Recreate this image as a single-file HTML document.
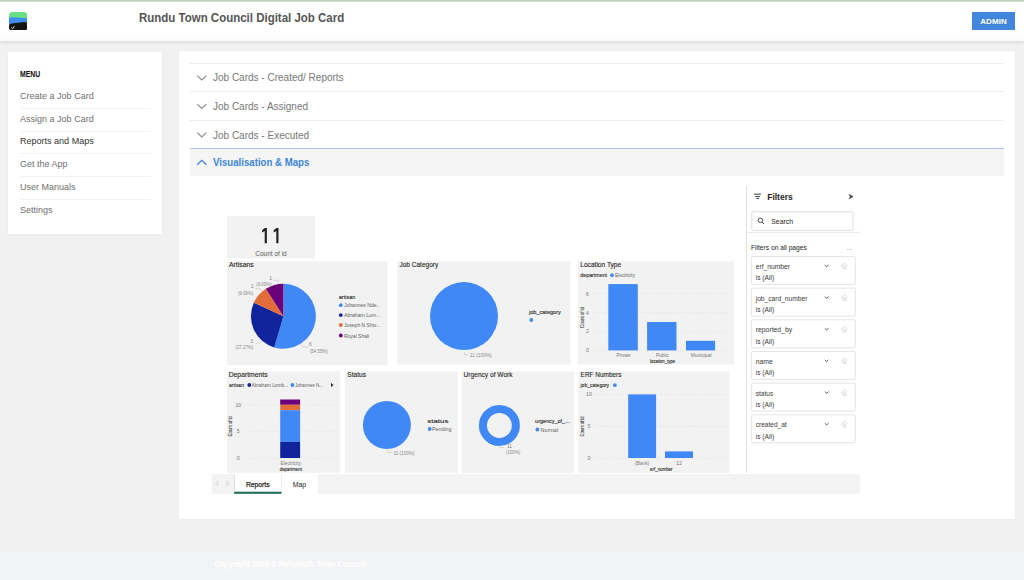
<!DOCTYPE html>
<html><head><meta charset="utf-8">
<style>
*{margin:0;padding:0;box-sizing:border-box}
html,body{width:1024px;height:580px;overflow:hidden;background:#f1f1f1;font-family:"Liberation Sans",sans-serif}
.abs{position:absolute}
#topline{left:0;top:0;width:1024px;height:2.2px;background:linear-gradient(#bcd4b8 55%,#dfe3de)}
#header{left:0;top:0;width:1024px;height:41px;background:linear-gradient(#fff 33px,#fafafa 41px);box-shadow:0 1px 4px rgba(0,0,0,.12)}
#title{left:139.3px;top:11.1px;font-size:12px;transform:scaleX(0.957);transform-origin:0 0;font-weight:bold;color:#555;white-space:nowrap}
#admin{left:972px;top:12px;width:43px;height:18.3px;background:#4285dc;color:#fff;font-size:8px;font-weight:bold;text-align:center;line-height:19.6px;letter-spacing:0.1px}
#side{left:8px;top:51.8px;width:154px;height:182px;background:#fff;box-shadow:0 0 2px rgba(0,0,0,.05)}
.menu-h{left:20px;top:69.6px;font-size:8.2px;transform:scaleX(0.84);transform-origin:0 0;font-weight:bold;color:#111}
.mi{left:20px;width:131px;height:23px;font-size:9.3px;color:#6f6f6f;transform:scaleX(0.97);transform-origin:0 0;white-space:nowrap}
.sep{left:20px;width:131px;height:1px;background:#f2f2f2}
#main{left:179px;top:51px;width:836px;height:467.5px;background:#fff;box-shadow:0 0 2px rgba(0,0,0,.05)}
.acc{left:190px;width:814px;height:1px;background:#ececec}
.acc-t{left:213px;font-size:10px;color:#777;white-space:nowrap}
#footer{left:0;top:552px;width:1024px;height:28px;background:#f2f3f5}
#copy{left:213.6px;top:558.8px;font-size:8.4px;font-weight:bold;color:#fff;white-space:nowrap;transform:scaleX(0.906);transform-origin:0 0}
</style></head><body>
<div class="abs" id="header"></div>
<div class="abs" id="topline"></div>
<svg class="abs" style="left:8.6px;top:11.8px" width="18.4" height="18.6" viewBox="0 0 18.4 18.6">
 <defs><clipPath id="lc"><rect x="0" y="0" width="18.4" height="18.6" rx="3.6"/></clipPath></defs>
 <g clip-path="url(#lc)">
  <rect x="0" y="0" width="18.4" height="18.6" fill="#6ade83"/>
  <path d="M0 7.5 Q0 5.2 2.5 5.3 L18.4 6.4 L18.4 18.6 L0 18.6Z" fill="#3f8bf5"/>
  <path d="M0 14 Q0 11.7 2.5 11.5 L15.5 10.1 Q18.4 9.9 18.4 12.5 L18.4 18.6 L0 18.6Z" fill="#151212"/>
  <path d="M2.3 15.6 L3.6 16.8 L5.5 14" stroke="#d8d8d8" stroke-width="1" fill="none"/>
 </g>
</svg>
<div class="abs" id="title">Rundu Town Council Digital Job Card</div>
<div class="abs" id="admin">ADMIN</div>

<div class="abs" id="side"></div>
<div class="abs menu-h">MENU</div>
<div class="abs mi" style="top:91.1px">Create a Job Card</div>
<div class="abs sep" style="top:108px"></div>
<div class="abs mi" style="top:113.8px">Assign a Job Card</div>
<div class="abs sep" style="top:131px"></div>
<div class="abs mi" style="top:136.3px;color:#333">Reports and Maps</div>
<div class="abs sep" style="top:153px"></div>
<div class="abs mi" style="top:159.2px">Get the App</div>
<div class="abs sep" style="top:176px"></div>
<div class="abs mi" style="top:181.9px">User Manuals</div>
<div class="abs sep" style="top:199px"></div>
<div class="abs mi" style="top:204.9px">Settings</div>

<div class="abs" id="main"></div>
<div class="abs acc" style="top:63px"></div>
<div class="abs acc-t" style="top:72.4px">Job Cards - Created/ Reports</div>
<div class="abs acc" style="top:91px"></div>
<div class="abs acc-t" style="top:101px">Job Cards - Assigned</div>
<div class="abs acc" style="top:120px"></div>
<div class="abs acc-t" style="top:129.5px">Job Cards - Executed</div>
<div class="abs" style="left:190px;top:148px;width:814px;height:28px;background:#f5f5f5;border-top:1px solid #a9c4e8"></div>
<div class="abs acc-t" style="top:157px;color:#3d85d8;font-weight:bold;transform:scaleX(0.965);transform-origin:0 0">Visualisation &amp; Maps</div>

<svg class="abs" style="left:0;top:0" width="1024" height="200">
<path d="M197.2 75.6 L201.8 80 L206.4 75.6" stroke="#8a8a8a" stroke-width="1.1" fill="none"/>
<path d="M197.2 104.1 L201.8 108.5 L206.4 104.1" stroke="#8a8a8a" stroke-width="1.1" fill="none"/>
<path d="M197.2 132.6 L201.8 137 L206.4 132.6" stroke="#8a8a8a" stroke-width="1.1" fill="none"/>
<path d="M197.2 164.8 L201.8 160.4 L206.4 164.8" stroke="#3d85d8" stroke-width="1.3" fill="none"/>
</svg>
<svg class="abs" style="left:0;top:0" width="1024" height="580" viewBox="0 0 1024 580" font-family="Liberation Sans, sans-serif">
<rect x="227" y="216" width="88.00" height="42.30" fill="#f2f2f2"/>
<path d="M264.7,228 H266.9 V243.2 H264.7 V231 L262.09999999999997,232.6 V230.3 Z" fill="#252423" stroke="none" stroke-width="0.5"/>
<path d="M276.3,228 H278.5 V243.2 H276.3 V231 L273.7,232.6 V230.3 Z" fill="#252423" stroke="none" stroke-width="0.5"/>
<text x="271" y="255.5" font-size="7.2" fill="#605e5c" font-weight="normal" text-anchor="middle" textLength="31.5" lengthAdjust="spacingAndGlyphs">Count of id</text>
<rect x="227" y="261.3" width="160.30" height="103.70" fill="#f2f2f2"/>
<text x="229" y="267" font-size="6.8" fill="#252423" font-weight="normal" text-anchor="start" textLength="24.8" lengthAdjust="spacingAndGlyphs" stroke="#252423" stroke-width="0.1">Artisans</text>
<path d="M283.4,316.2 L283.40,283.70 A32.5,32.5 0 1 1 274.24,347.38 Z" fill="#3f88f5" stroke="none" stroke-width="0.5"/>
<path d="M283.4,316.2 L274.24,347.38 A32.5,32.5 0 0 1 253.84,302.70 Z" fill="#12239e" stroke="none" stroke-width="0.5"/>
<path d="M283.4,316.2 L253.84,302.70 A32.5,32.5 0 0 1 265.83,288.86 Z" fill="#e06d3a" stroke="none" stroke-width="0.5"/>
<path d="M283.4,316.2 L265.83,288.86 A32.5,32.5 0 0 1 283.40,283.70 Z" fill="#6b007b" stroke="none" stroke-width="0.5"/>
<text x="270.7" y="279.5" font-size="5" fill="#888" font-weight="normal" text-anchor="middle">1</text>
<text x="256.2" y="286" font-size="5" fill="#888" font-weight="normal" text-anchor="start" textLength="15.5" lengthAdjust="spacingAndGlyphs">(9.09%)</text>
<path d="M273.6,280.3 H278.6 V283.4" fill="none" stroke="#bbb" stroke-width="0.5"/>
<text x="252.2" y="288.2" font-size="5" fill="#888" font-weight="normal" text-anchor="middle">1</text>
<text x="237.9" y="294.7" font-size="5" fill="#888" font-weight="normal" text-anchor="start" textLength="15.2" lengthAdjust="spacingAndGlyphs">(9.09%)</text>
<path d="M255.2,288.6 H259.7 L261.9,290.7" fill="none" stroke="#bbb" stroke-width="0.5"/>
<text x="251.7" y="342.8" font-size="5" fill="#888" font-weight="normal" text-anchor="middle">3</text>
<text x="235.5" y="349.4" font-size="5" fill="#888" font-weight="normal" text-anchor="start" textLength="17.6" lengthAdjust="spacingAndGlyphs">(27.27%)</text>
<path d="M255.5,343.2 H259.5 L262,341" fill="none" stroke="#bbb" stroke-width="0.5"/>
<text x="310.3" y="345.8" font-size="5" fill="#888" font-weight="normal" text-anchor="middle">6</text>
<text x="309.9" y="352.7" font-size="5" fill="#888" font-weight="normal" text-anchor="start" textLength="17.8" lengthAdjust="spacingAndGlyphs">(54.55%)</text>
<path d="M300.5,344.5 L303,347 H308" fill="none" stroke="#bbb" stroke-width="0.5"/>
<text x="338.7" y="299" font-size="5.8" fill="#252423" font-weight="normal" text-anchor="start" textLength="16.8" lengthAdjust="spacingAndGlyphs" stroke="#252423" stroke-width="0.1">artisan</text>
<circle cx="340.8" cy="305.2" r="1.9" fill="#3f88f5"/>
<text x="344" y="307.2" font-size="5.8" fill="#605e5c" font-weight="normal" text-anchor="start" textLength="36.7" lengthAdjust="spacingAndGlyphs">Johannes Nde...</text>
<circle cx="340.8" cy="315.1" r="1.9" fill="#12239e"/>
<text x="344" y="317.1" font-size="5.8" fill="#605e5c" font-weight="normal" text-anchor="start" textLength="36.5" lengthAdjust="spacingAndGlyphs">Abraham Lom...</text>
<circle cx="340.8" cy="325.0" r="1.9" fill="#e06d3a"/>
<text x="344" y="327.0" font-size="5.8" fill="#605e5c" font-weight="normal" text-anchor="start" textLength="36.2" lengthAdjust="spacingAndGlyphs">Joseph N Shiv...</text>
<circle cx="340.8" cy="335.5" r="1.9" fill="#6b007b"/>
<text x="344" y="337.5" font-size="5.8" fill="#605e5c" font-weight="normal" text-anchor="start" textLength="25.2" lengthAdjust="spacingAndGlyphs">Royal Shali</text>
<rect x="397.3" y="261.3" width="173.20" height="103.40" fill="#f2f2f2"/>
<text x="399.5" y="267" font-size="6.8" fill="#252423" font-weight="normal" text-anchor="start" textLength="38.7" lengthAdjust="spacingAndGlyphs" stroke="#252423" stroke-width="0.1">Job Category</text>
<circle cx="464" cy="316.1" r="34" fill="#3f88f5"/>
<text x="528.9" y="314" font-size="5.8" fill="#252423" font-weight="normal" text-anchor="start" textLength="32" lengthAdjust="spacingAndGlyphs" stroke="#252423" stroke-width="0.1">job_category</text>
<circle cx="531.3" cy="320" r="1.9" fill="#3f88f5"/>
<path d="M464.4,352.2 V354.8 H468.4" fill="none" stroke="#bbb" stroke-width="0.5"/>
<text x="470" y="357" font-size="5" fill="#888" font-weight="normal" text-anchor="start" textLength="21.6" lengthAdjust="spacingAndGlyphs">11 (100%)</text>
<rect x="578" y="261.3" width="156.20" height="103.30" fill="#f2f2f2"/>
<text x="580.3" y="267" font-size="6.8" fill="#252423" font-weight="normal" text-anchor="start" textLength="40.9" lengthAdjust="spacingAndGlyphs" stroke="#252423" stroke-width="0.1">Location Type</text>
<text x="580.3" y="277" font-size="5.5" fill="#252423" font-weight="normal" text-anchor="start" textLength="26.8" lengthAdjust="spacingAndGlyphs" stroke="#252423" stroke-width="0.1">department</text>
<circle cx="612" cy="275.2" r="1.9" fill="#3f88f5"/>
<text x="615" y="277" font-size="5.5" fill="#605e5c" font-weight="normal" text-anchor="start" textLength="20" lengthAdjust="spacingAndGlyphs">Electricity</text>
<text x="587.4" y="295.5" font-size="5.2" fill="#777" font-weight="normal" text-anchor="middle">6</text>
<line x1="592.2" y1="293.7" x2="732" y2="293.7" stroke="#d4d4d4" stroke-width="0.5" stroke-dasharray="0.8 1.4"/>
<text x="587.4" y="314.5" font-size="5.2" fill="#777" font-weight="normal" text-anchor="middle">4</text>
<line x1="592.2" y1="312.7" x2="732" y2="312.7" stroke="#d4d4d4" stroke-width="0.5" stroke-dasharray="0.8 1.4"/>
<text x="587.4" y="333.40000000000003" font-size="5.2" fill="#777" font-weight="normal" text-anchor="middle">2</text>
<line x1="592.2" y1="331.6" x2="732" y2="331.6" stroke="#d4d4d4" stroke-width="0.5" stroke-dasharray="0.8 1.4"/>
<text x="587.4" y="352.3" font-size="5.2" fill="#777" font-weight="normal" text-anchor="middle">0</text>
<line x1="592.2" y1="350.5" x2="732" y2="350.5" stroke="#d4d4d4" stroke-width="0.5" stroke-dasharray="0.8 1.4"/>
<text x="582.3" y="317.5" stroke="#3a3a3a" stroke-width="0.1" font-size="5" fill="#3a3a3a" font-weight="normal" text-anchor="middle" textLength="21" lengthAdjust="spacingAndGlyphs" transform="rotate(-90 582.3 317.5)" dominant-baseline="central">Count of id</text>
<rect x="608.3" y="284.1" width="29.50" height="66.30" fill="#3f88f5"/>
<rect x="647.1" y="322" width="29.40" height="28.40" fill="#3f88f5"/>
<rect x="686" y="340.8" width="29.10" height="9.60" fill="#3f88f5"/>
<text x="623.5" y="357.2" font-size="5.2" fill="#777" font-weight="normal" text-anchor="middle" textLength="14" lengthAdjust="spacingAndGlyphs">Private</text>
<text x="662.4" y="357.2" font-size="5.2" fill="#777" font-weight="normal" text-anchor="middle" textLength="13" lengthAdjust="spacingAndGlyphs">Public</text>
<text x="701.2" y="357.2" font-size="5.2" fill="#777" font-weight="normal" text-anchor="middle" textLength="20.8" lengthAdjust="spacingAndGlyphs">Municipal</text>
<text x="662.6" y="363" font-size="5" fill="#252423" font-weight="normal" text-anchor="middle" textLength="25" lengthAdjust="spacingAndGlyphs" stroke="#252423" stroke-width="0.1">location_type</text>
<rect x="227" y="371.3" width="113.00" height="101.50" fill="#f2f2f2"/>
<text x="228.7" y="377" font-size="6.8" fill="#252423" font-weight="normal" text-anchor="start" textLength="38.9" lengthAdjust="spacingAndGlyphs" stroke="#252423" stroke-width="0.1">Departments</text>
<text x="229" y="387" font-size="5.5" fill="#252423" font-weight="normal" text-anchor="start" textLength="14.9" lengthAdjust="spacingAndGlyphs" stroke="#252423" stroke-width="0.1">artisan</text>
<circle cx="249.3" cy="385" r="1.9" fill="#12239e"/>
<text x="251.6" y="387" font-size="5.5" fill="#605e5c" font-weight="normal" text-anchor="start" textLength="36.4" lengthAdjust="spacingAndGlyphs">Abraham Lomb...</text>
<circle cx="292.4" cy="385" r="1.9" fill="#3f88f5"/>
<text x="295" y="387" font-size="5.5" fill="#605e5c" font-weight="normal" text-anchor="start" textLength="28.1" lengthAdjust="spacingAndGlyphs">Johannes N...</text>
<path d="M331,383 L333.5,385 L331,387 Z" fill="#252423" stroke="none" stroke-width="0.5"/>
<text x="238.3" y="406.90000000000003" font-size="5.2" fill="#777" font-weight="normal" text-anchor="middle">10</text>
<line x1="244" y1="405.1" x2="338" y2="405.1" stroke="#d4d4d4" stroke-width="0.5" stroke-dasharray="0.8 1.4"/>
<text x="238.3" y="433.2" font-size="5.2" fill="#777" font-weight="normal" text-anchor="middle">5</text>
<line x1="244" y1="431.4" x2="338" y2="431.4" stroke="#d4d4d4" stroke-width="0.5" stroke-dasharray="0.8 1.4"/>
<text x="238.3" y="459.8" font-size="5.2" fill="#777" font-weight="normal" text-anchor="middle">0</text>
<line x1="244" y1="458" x2="338" y2="458" stroke="#d4d4d4" stroke-width="0.5" stroke-dasharray="0.8 1.4"/>
<text x="230.5" y="426.3" stroke="#3a3a3a" stroke-width="0.1" font-size="4.8" fill="#3a3a3a" font-weight="normal" text-anchor="middle" textLength="20.4" lengthAdjust="spacingAndGlyphs" transform="rotate(-90 230.5 426.3)" dominant-baseline="central">Count of id</text>
<rect x="280.2" y="399.5" width="19.90" height="5.30" fill="#6b007b"/>
<rect x="280.2" y="404.8" width="19.90" height="5.40" fill="#e06d3a"/>
<rect x="280.2" y="410.2" width="19.90" height="31.70" fill="#3f88f5"/>
<rect x="280.2" y="441.9" width="19.90" height="16.10" fill="#12239e"/>
<text x="290.8" y="464.5" font-size="5.2" fill="#777" font-weight="normal" text-anchor="middle" textLength="20.4" lengthAdjust="spacingAndGlyphs">Electricity</text>
<text x="290.8" y="470.8" font-size="5" fill="#252423" font-weight="normal" text-anchor="middle" textLength="22.2" lengthAdjust="spacingAndGlyphs" stroke="#252423" stroke-width="0.1">department</text>
<rect x="344.9" y="371.3" width="113.00" height="101.50" fill="#f2f2f2"/>
<text x="347.3" y="377" font-size="6.8" fill="#252423" font-weight="normal" text-anchor="start" textLength="18.7" lengthAdjust="spacingAndGlyphs" stroke="#252423" stroke-width="0.1">Status</text>
<circle cx="386.9" cy="425" r="24" fill="#3f88f5"/>
<text x="427.2" y="422.5" font-size="5.8" fill="#252423" font-weight="normal" text-anchor="start" textLength="21.3" lengthAdjust="spacingAndGlyphs" stroke="#252423" stroke-width="0.1">status</text>
<circle cx="429.7" cy="429" r="1.9" fill="#3f88f5"/>
<text x="432" y="431" font-size="5.8" fill="#605e5c" font-weight="normal" text-anchor="start" textLength="19.5" lengthAdjust="spacingAndGlyphs">Pending</text>
<path d="M387.6,449.5 V452.3 H392" fill="none" stroke="#bbb" stroke-width="0.5"/>
<text x="393.4" y="454.5" font-size="5" fill="#888" font-weight="normal" text-anchor="start" textLength="21.1" lengthAdjust="spacingAndGlyphs">11 (100%)</text>
<rect x="461.6" y="371.3" width="112.40" height="101.70" fill="#f2f2f2"/>
<text x="463.6" y="377.4" font-size="6.8" fill="#252423" font-weight="normal" text-anchor="start" textLength="49" lengthAdjust="spacingAndGlyphs" stroke="#252423" stroke-width="0.1">Urgency of Work</text>
<circle cx="499.4" cy="425.5" r="16.45" fill="none" stroke="#3f88f5" stroke-width="8.1"/>
<text x="535.1" y="423.2" font-size="5.8" fill="#252423" font-weight="normal" text-anchor="start" textLength="34.6" lengthAdjust="spacingAndGlyphs" stroke="#252423" stroke-width="0.1">urgency_of_...</text>
<circle cx="537.4" cy="429.5" r="1.9" fill="#3f88f5"/>
<text x="540.6" y="431.5" font-size="5.8" fill="#605e5c" font-weight="normal" text-anchor="start" textLength="17.5" lengthAdjust="spacingAndGlyphs">Normal</text>
<path d="M499.7,444.5 V447.5 H504" fill="none" stroke="#bbb" stroke-width="0.5"/>
<text x="506.9" y="447.5" font-size="5" fill="#888" font-weight="normal" text-anchor="start">11</text>
<text x="506" y="454.2" font-size="5" fill="#888" font-weight="normal" text-anchor="start" textLength="14.1" lengthAdjust="spacingAndGlyphs">(100%)</text>
<rect x="578.3" y="371.3" width="151.30" height="101.70" fill="#f2f2f2"/>
<text x="580.6" y="376.8" font-size="6.8" fill="#252423" font-weight="normal" text-anchor="start" textLength="40.9" lengthAdjust="spacingAndGlyphs" stroke="#252423" stroke-width="0.1">ERF Numbers</text>
<text x="580.5" y="387.2" font-size="5.5" fill="#252423" font-weight="normal" text-anchor="start" textLength="28.6" lengthAdjust="spacingAndGlyphs" stroke="#252423" stroke-width="0.1">job_category</text>
<circle cx="614.9" cy="385.2" r="1.9" fill="#3f88f5"/>
<text x="589" y="396.2" font-size="5.2" fill="#777" font-weight="normal" text-anchor="middle">10</text>
<line x1="594" y1="394.4" x2="728" y2="394.4" stroke="#d4d4d4" stroke-width="0.5" stroke-dasharray="0.8 1.4"/>
<text x="589" y="428.0" font-size="5.2" fill="#777" font-weight="normal" text-anchor="middle">5</text>
<line x1="594" y1="426.2" x2="728" y2="426.2" stroke="#d4d4d4" stroke-width="0.5" stroke-dasharray="0.8 1.4"/>
<text x="589" y="459.8" font-size="5.2" fill="#777" font-weight="normal" text-anchor="middle">0</text>
<line x1="594" y1="458" x2="728" y2="458" stroke="#d4d4d4" stroke-width="0.5" stroke-dasharray="0.8 1.4"/>
<text x="582.6" y="426.4" stroke="#3a3a3a" stroke-width="0.1" font-size="4.8" fill="#3a3a3a" font-weight="normal" text-anchor="middle" textLength="20" lengthAdjust="spacingAndGlyphs" transform="rotate(-90 582.6 426.4)" dominant-baseline="central">Count of id</text>
<rect x="628.2" y="394.4" width="27.90" height="63.60" fill="#3f88f5"/>
<rect x="665" y="451.4" width="28.00" height="6.60" fill="#3f88f5"/>
<text x="642" y="464.8" font-size="5.2" fill="#777" font-weight="normal" text-anchor="middle" textLength="14.4" lengthAdjust="spacingAndGlyphs">(Blank)</text>
<text x="679" y="464.8" font-size="5.2" fill="#777" font-weight="normal" text-anchor="middle">12</text>
<text x="661.3" y="470.8" font-size="5" fill="#252423" font-weight="normal" text-anchor="middle" textLength="22.5" lengthAdjust="spacingAndGlyphs" stroke="#252423" stroke-width="0.1">erf_number</text>
<line x1="746.5" y1="186" x2="746.5" y2="473" stroke="#e1e1e1" stroke-width="1"/>
<rect x="754.1" y="193.7" width="6.80" height="0.90" fill="#252423"/>
<rect x="755.1" y="196.2" width="4.80" height="0.90" fill="#252423"/>
<rect x="756.4" y="198.1" width="2.50" height="0.90" fill="#252423"/>
<text x="767.2" y="200" font-size="9" fill="#252423" font-weight="bold" text-anchor="start" textLength="25.5" lengthAdjust="spacingAndGlyphs">Filters</text>
<path d="M848.9,194.2 L853.1,196.6 L848.9,199 L850.2,196.6 Z" fill="#3a3a3a" stroke="#3a3a3a" stroke-width="0.4"/>
<rect x="751.8" y="211.8" width="101.2" height="18.5" rx="0.6" fill="#fff" stroke="#d4d4d4" stroke-width="0.8"/>
<circle cx="760.4" cy="220.3" r="2.3" fill="none" stroke="#252423" stroke-width="0.8"/>
<line x1="762" y1="222" x2="764" y2="224" stroke="#252423" stroke-width="0.9"/>
<text x="771.3" y="224.2" font-size="7.6" fill="#252423" font-weight="normal" text-anchor="start" textLength="21.7" lengthAdjust="spacingAndGlyphs">Search</text>
<line x1="746.5" y1="232.4" x2="859.7" y2="232.4" stroke="#e1e1e1" stroke-width="0.8"/>
<text x="751" y="250.2" font-size="7" fill="#252423" font-weight="normal" text-anchor="start" textLength="55.8" lengthAdjust="spacingAndGlyphs">Filters on all pages</text>
<circle cx="847.8" cy="249.3" r="0.4" fill="#555"/>
<circle cx="849.5999999999999" cy="249.3" r="0.4" fill="#555"/>
<circle cx="851.4" cy="249.3" r="0.4" fill="#555"/>
<rect x="751.6" y="256.50" width="103.7" height="28" rx="1.2" fill="#fff" stroke="#dedede" stroke-width="0.8"/>
<text x="755.7" y="269.1" font-size="7" fill="#3b3a39" font-weight="normal" text-anchor="start" textLength="34.4" lengthAdjust="spacingAndGlyphs">erf_number</text>
<text x="755.7" y="280.3" font-size="7" fill="#3b3a39" font-weight="normal" text-anchor="start" textLength="18.5" lengthAdjust="spacingAndGlyphs">is (All)</text>
<path d="M824.8,265.00 L826.7,266.60 L828.6,265.00" fill="none" stroke="#333" stroke-width="0.8"/>
<path d="M841.2,266.30 L844.6,262.90 L847,265.30 L843.6,268.60 Z M843.6,268.60 H846.6 M842.4,265.10 L845.8,267.50" fill="none" stroke="#c4c4c4" stroke-width="0.6"/>
<rect x="751.6" y="288.15" width="103.7" height="28" rx="1.2" fill="#fff" stroke="#dedede" stroke-width="0.8"/>
<text x="755.7" y="300.75" font-size="7" fill="#3b3a39" font-weight="normal" text-anchor="start" textLength="51.7" lengthAdjust="spacingAndGlyphs">job_card_number</text>
<text x="755.7" y="311.95" font-size="7" fill="#3b3a39" font-weight="normal" text-anchor="start" textLength="18.5" lengthAdjust="spacingAndGlyphs">is (All)</text>
<path d="M824.8,296.65 L826.7,298.25 L828.6,296.65" fill="none" stroke="#333" stroke-width="0.8"/>
<path d="M841.2,297.95 L844.6,294.55 L847,296.95 L843.6,300.25 Z M843.6,300.25 H846.6 M842.4,296.75 L845.8,299.15" fill="none" stroke="#c4c4c4" stroke-width="0.6"/>
<rect x="751.6" y="319.80" width="103.7" height="28" rx="1.2" fill="#fff" stroke="#dedede" stroke-width="0.8"/>
<text x="755.7" y="332.40000000000003" font-size="7" fill="#3b3a39" font-weight="normal" text-anchor="start" textLength="36.5" lengthAdjust="spacingAndGlyphs">reported_by</text>
<text x="755.7" y="343.6" font-size="7" fill="#3b3a39" font-weight="normal" text-anchor="start" textLength="18.5" lengthAdjust="spacingAndGlyphs">is (All)</text>
<path d="M824.8,328.30 L826.7,329.90 L828.6,328.30" fill="none" stroke="#333" stroke-width="0.8"/>
<path d="M841.2,329.60 L844.6,326.20 L847,328.60 L843.6,331.90 Z M843.6,331.90 H846.6 M842.4,328.40 L845.8,330.80" fill="none" stroke="#c4c4c4" stroke-width="0.6"/>
<rect x="751.6" y="351.45" width="103.7" height="28" rx="1.2" fill="#fff" stroke="#dedede" stroke-width="0.8"/>
<text x="755.7" y="364.05" font-size="7" fill="#3b3a39" font-weight="normal" text-anchor="start" textLength="17" lengthAdjust="spacingAndGlyphs">name</text>
<text x="755.7" y="375.25" font-size="7" fill="#3b3a39" font-weight="normal" text-anchor="start" textLength="18.5" lengthAdjust="spacingAndGlyphs">is (All)</text>
<path d="M824.8,359.95 L826.7,361.55 L828.6,359.95" fill="none" stroke="#333" stroke-width="0.8"/>
<path d="M841.2,361.25 L844.6,357.85 L847,360.25 L843.6,363.55 Z M843.6,363.55 H846.6 M842.4,360.05 L845.8,362.45" fill="none" stroke="#c4c4c4" stroke-width="0.6"/>
<rect x="751.6" y="383.10" width="103.7" height="28" rx="1.2" fill="#fff" stroke="#dedede" stroke-width="0.8"/>
<text x="755.7" y="395.70000000000005" font-size="7" fill="#3b3a39" font-weight="normal" text-anchor="start" textLength="17.5" lengthAdjust="spacingAndGlyphs">status</text>
<text x="755.7" y="406.90000000000003" font-size="7" fill="#3b3a39" font-weight="normal" text-anchor="start" textLength="18.5" lengthAdjust="spacingAndGlyphs">is (All)</text>
<path d="M824.8,391.60 L826.7,393.20 L828.6,391.60" fill="none" stroke="#333" stroke-width="0.8"/>
<path d="M841.2,392.90 L844.6,389.50 L847,391.90 L843.6,395.20 Z M843.6,395.20 H846.6 M842.4,391.70 L845.8,394.10" fill="none" stroke="#c4c4c4" stroke-width="0.6"/>
<rect x="751.6" y="414.75" width="103.7" height="28" rx="1.2" fill="#fff" stroke="#dedede" stroke-width="0.8"/>
<text x="755.7" y="427.35" font-size="7" fill="#3b3a39" font-weight="normal" text-anchor="start" textLength="31" lengthAdjust="spacingAndGlyphs">created_at</text>
<text x="755.7" y="438.55" font-size="7" fill="#3b3a39" font-weight="normal" text-anchor="start" textLength="18.5" lengthAdjust="spacingAndGlyphs">is (All)</text>
<path d="M824.8,423.25 L826.7,424.85 L828.6,423.25" fill="none" stroke="#333" stroke-width="0.8"/>
<path d="M841.2,424.55 L844.6,421.15 L847,423.55 L843.6,426.85 Z M843.6,426.85 H846.6 M842.4,423.35 L845.8,425.75" fill="none" stroke="#c4c4c4" stroke-width="0.6"/>
<rect x="211.7" y="474" width="648.30" height="20.00" fill="#f3f3f3"/>
<rect x="234.2" y="474" width="83.80" height="20.00" fill="#fff"/>
<line x1="234.5" y1="474" x2="234.5" y2="492" stroke="#d4d4d4" stroke-width="0.7"/>
<line x1="281.5" y1="474" x2="281.5" y2="492" stroke="#e0e0e0" stroke-width="0.6"/>
<rect x="234.2" y="491.7" width="47.30" height="2.10" fill="#1f6e5a"/>
<path d="M217.8,481.2 L215,483.5 L217.8,485.8 Z" fill="none" stroke="#cfcfcf" stroke-width="0.7"/>
<path d="M227,481.2 L229.8,483.5 L227,485.8 Z" fill="none" stroke="#cfcfcf" stroke-width="0.7"/>
<text x="245.9" y="487.1" font-size="7.6" fill="#252423" font-weight="normal" text-anchor="start" textLength="23.7" lengthAdjust="spacingAndGlyphs" stroke="#252423" stroke-width="0.25">Reports</text>
<text x="292.7" y="487.2" font-size="7.6" fill="#252423" font-weight="normal" text-anchor="start" textLength="13.5" lengthAdjust="spacingAndGlyphs">Map</text>
</svg>
<div class="abs" id="footer"></div>
<div class="abs" id="copy">Copyright 2025 © Rehoboth Town Council</div>
</body></html>
